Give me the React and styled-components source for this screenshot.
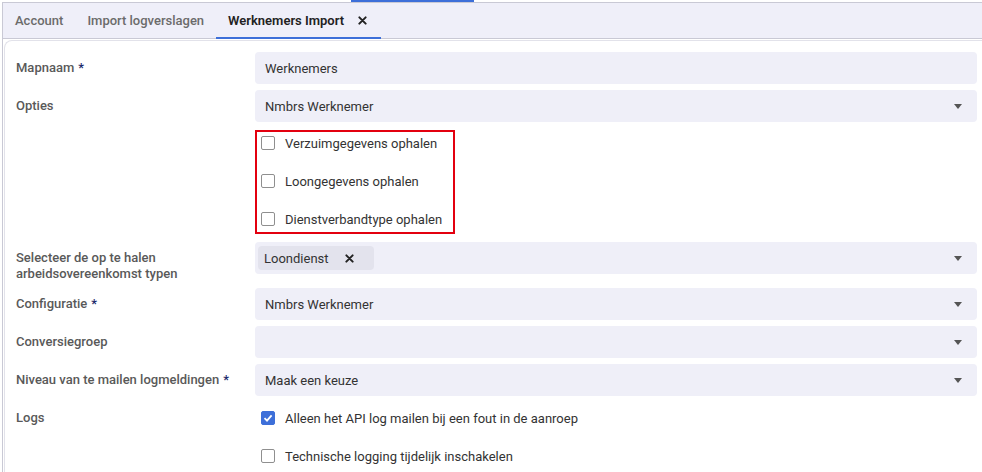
import React from 'react';
import styled, { createGlobalStyle } from 'styled-components';

const GlobalStyle = createGlobalStyle`
  body {
    margin: 0;
    background: #ffffff;
    font-family: Roboto, "Liberation Sans", sans-serif;
    font-size: 13px;
    color: #333;
  }
`;

const Page = styled.div`
  width: 982px;
  height: 472px;
  overflow: hidden;
  padding-left: 2px;
  box-sizing: border-box;
`;

const TopStrip = styled.div`
  height: 2px;
  display: flex;
`;

const TopMarker = styled.div`
  margin-left: 349px;
  width: 123px;
  height: 2px;
  background: #3d6fd9;
`;

const Frame = styled.div`
  border-left: 1px solid #c9c9d5;
  border-top: 1px solid #c9c9d5;
  height: 100%;
`;

const TabBar = styled.div`
  display: flex;
  height: 35px;
  background: #efeff9;
  border-bottom: 1px solid #c9c9d5;
`;

const Tab = styled.div`
  display: flex;
  align-items: center;
  gap: 14px;
  padding: 0 ${(p) => (p.$active ? '14px' : '12px')} 0 12px;
  font-weight: ${(p) => (p.$active ? 600 : 500)};
  color: ${(p) => (p.$active ? '#222' : '#6b6b6b')};
  border-bottom: 2px solid ${(p) => (p.$active ? '#3d6fd9' : 'transparent')};
  margin-bottom: -1px;
`;

const Card = styled.div`
  margin-left: 1px;
  margin-top: 1px;
  border-top-left-radius: 8px;
  border-left: 1px solid #e2e2ea;
  border-top: 1px solid #e2e2ea;
  padding: 11px 5px 0 11px;
  display: flex;
  flex-direction: column;
  gap: 6px;
`;

const Row = styled.div`
  display: grid;
  grid-template-columns: 239px 1fr;
  margin: ${(p) => p.$margin || '0'};
`;

const Label = styled.div`
  align-self: start;
  padding-top: 8px;
  line-height: 16px;
  font-weight: 500;
  color: #595959;
`;

const Star = styled.span`
  color: #1b2a6b;
  margin-left: 4px;
`;

const Input = styled.div`
  height: 32px;
  display: flex;
  align-items: center;
  justify-content: space-between;
  background: #efeff8;
  border-radius: 4px;
  padding: 0 15px 0 ${(p) => (p.$chips ? '3px' : '10px')};
  color: #333;
`;

const Caret = styled.span`
  width: 0;
  height: 0;
  border-left: 4px solid transparent;
  border-right: 4px solid transparent;
  border-top: 5px solid #555;
`;

const Chip = styled.div`
  display: flex;
  align-items: center;
  gap: 16px;
  height: 24px;
  padding: 0 20px 0 6px;
  background: #e3e3ed;
  border-radius: 4px;
  color: #333;
`;

const Highlight = styled.div`
  width: 200px;
  box-sizing: border-box;
  border: 2px solid #e3000f;
  padding: 0 0 2px 4px;
  display: flex;
  flex-direction: column;
  gap: 16px;
`;

const CheckList = styled.div`
  display: flex;
  flex-direction: column;
  gap: 6px;
  padding-left: 6px;
`;

const CheckRow = styled.label`
  display: flex;
  align-items: center;
  gap: 10px;
  height: ${(p) => (p.$tall ? '32px' : '22px')};
  color: #333;
`;

const Box = styled.span`
  width: 14px;
  height: 14px;
  box-sizing: border-box;
  border-radius: 2px;
  border: 1px solid ${(p) => (p.$checked ? '#3d6fd9' : '#8f8f8f')};
  background: ${(p) => (p.$checked ? '#3d6fd9' : '#fff')};
  display: flex;
  align-items: center;
  justify-content: center;
`;

function Cross({ size = 9 }) {
  return (
    <svg width={size} height={size} viewBox="0 0 10 10">
      <path d="M1.5 1.5 L8.5 8.5 M8.5 1.5 L1.5 8.5" stroke="#222" strokeWidth="2.2" strokeLinecap="round" />
    </svg>
  );
}

function Check({ checked, children, tall }) {
  return (
    <CheckRow $tall={tall}>
      <Box $checked={checked}>
        {checked && (
          <svg width="10" height="10" viewBox="0 0 10 10">
            <path d="M1.5 5.2 L4 7.6 L8.6 2.4" stroke="#fff" strokeWidth="1.8" fill="none" />
          </svg>
        )}
      </Box>
      {children}
    </CheckRow>
  );
}

function Field({ label, required, children }) {
  return (
    <Row>
      <Label>
        {label}
        {required && <Star>*</Star>}
      </Label>
      {children}
    </Row>
  );
}

const tabs = ['Account', 'Import logverslagen', 'Werknemers Import'];

export default function App() {
  return (
    <Page>
      <GlobalStyle />
      <TopStrip>
        <TopMarker />
      </TopStrip>
      <Frame>
        <TabBar>
          {tabs.map((t, i) => (
            <Tab key={t} $active={i === 2}>
              {t}
              {i === 2 && <Cross />}
            </Tab>
          ))}
        </TabBar>
        <Card>
          <Field label="Mapnaam" required>
            <Input>Werknemers</Input>
          </Field>
          <Field label="Opties">
            <Input>
              Nmbrs Werknemer
              <Caret />
            </Input>
          </Field>
          <Row $margin="2px 0">
            <div />
            <Highlight>
              <Check>Verzuimgegevens ophalen</Check>
              <Check>Loongegevens ophalen</Check>
              <Check>Dienstverbandtype ophalen</Check>
            </Highlight>
          </Row>
          <Field label={<>Selecteer de op te halen<br />arbeidsovereenkomst typen</>}>
            <Input $chips>
              <Chip>
                Loondienst
                <Cross />
              </Chip>
              <Caret />
            </Input>
          </Field>
          <Field label="Configuratie" required>
            <Input>
              Nmbrs Werknemer
              <Caret />
            </Input>
          </Field>
          <Field label="Conversiegroep">
            <Input>
              <span />
              <Caret />
            </Input>
          </Field>
          <Field label="Niveau van te mailen logmeldingen" required>
            <Input>
              Maak een keuze
              <Caret />
            </Input>
          </Field>
          <Field label="Logs">
            <CheckList>
              <Check tall checked>Alleen het API log mailen bij een fout in de aanroep</Check>
              <Check tall>Technische logging tijdelijk inschakelen</Check>
            </CheckList>
          </Field>
        </Card>
      </Frame>
    </Page>
  );
}
